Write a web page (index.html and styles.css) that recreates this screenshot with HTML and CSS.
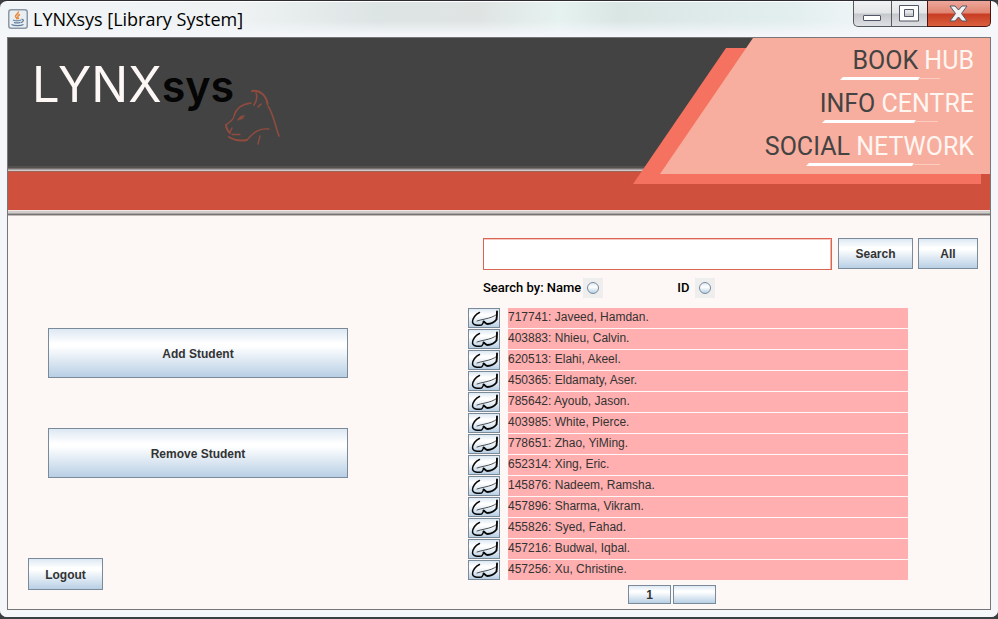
FILE: index.html
```html
<!DOCTYPE html>
<html lang="en">
<head>
<meta charset="utf-8">
<title>LYNXsys [Library System]</title>
<link rel="stylesheet" href="styles.css">
</head>
<body>
<div class="window">
  <header class="titlebar">
    <svg class="app-icon" viewBox="0 0 20 20" aria-hidden="true">
      <rect x="0.75" y="0.75" width="18.5" height="18.5" rx="2.5" fill="#e9eef2" stroke="#8d99a6" stroke-width="1.5"/>
      <path d="M10 2.500c1.500 2-3 3-2.500 5 .3 1 2 1.500 1.200 3M12 5.500c-2.500 1-3 2.500-1.200 4.500" fill="none" stroke="#e8883a" stroke-width="1.500"/>
      <path d="M5 11c2 1 6 1 8 0M13.500 10.500c3-.5 2 2.500-.5 3M6 13.300c2 .8 4.500.8 6.500 0M3.500 15.500c3 1.500 9 1.500 12 0" fill="none" stroke="#5d7f9f" stroke-width="1.300"/>
    </svg>
    <h1 class="title">LYNXsys [Library System]</h1>
    <div class="controls">
      <button class="control control-min" type="button" aria-label="Minimize">
        <svg width="18" height="6" viewBox="0 0 18 6"><rect x="0.5" y="0.500" width="17" height="5" rx="0.500" fill="#fff" stroke="#535666"/></svg>
      </button>
      <button class="control control-max" type="button" aria-label="Maximize">
        <svg width="20" height="17" viewBox="0 0 20 17"><path d="M.5.5h19v15.500H.5zM5.500 4.500v7h9v-7z" fill="#fff" fill-rule="evenodd" stroke="#535666"/></svg>
      </button>
      <button class="control control-close" type="button" aria-label="Close">
        <svg width="19" height="17" viewBox="0 0 19 17"><path d="M1 1h5l3.500 4L13 1h5l-5.500 7.500L18 16h-5l-3.500-4L6 16H1l5.500-7.500z" fill="#f2f2f2" stroke="#535666" stroke-linejoin="round"/></svg>
      </button>
    </div>
  </header>

  <div class="client">
    <div class="banner">
      <div class="masthead">
        <div class="logo"><span class="logo-lynx">LYNX</span><span class="logo-sys">sys</span></div>
        <svg class="lynx" viewBox="0 0 64 64" aria-hidden="true">
          <g fill="none" stroke="#8f4c3e" stroke-linecap="round" stroke-linejoin="round">
            <path stroke-width="2" d="M32 5c8-1 14 4 15.500 13M9 51c6 4 12 4 18 3M6 39c0 4 2 6 4 8"/>
            <path stroke-width="1.600" d="M36 7c2 4 1 7-2 12M41 18l-3 3M48 20c5 7 7 19 11 30"/>
            <path stroke-width="1.400" d="M31 17c-8 1-15 5-17 13 0 4-5 6-8 9M10 46l2-4"/>
            <path stroke-width="1.400" d="M18 34c2-3 4-4 6-4M20 33l3-1M12 48.500h8M27 54c7-8 12-12 22-11M40 50l-2 8"/>
          </g>
        </svg>
      </div>
      <div class="rule rule-top"></div>
      <div class="stripe"></div>
      <div class="rule rule-bottom"></div>
      <nav class="ribbon" aria-label="Main">
        <a class="nav-link" href="#books"><span class="strong">BOOK</span> HUB<span class="underline underline-a"></span></a>
        <a class="nav-link" href="#info"><span class="strong">INFO</span> CENTRE<span class="underline underline-b"></span></a>
        <a class="nav-link" href="#social"><span class="strong">SOCIAL</span> NETWORK<span class="underline underline-c"></span></a>
      </nav>
    </div>

    <main class="main">
      <section class="actions">
        <button class="button button-large" type="button">Add Student</button>
        <button class="button button-large" type="button">Remove Student</button>
        <button class="button button-logout" type="button">Logout</button>
      </section>

      <section class="browser">
        <form class="search">
          <div class="search-row">
            <input class="search-input" type="text" aria-label="Search students">
            <button class="button button-search" type="button">Search</button>
            <button class="button button-all" type="button">All</button>
          </div>
          <div class="filters">
            <label class="filter" for="by-name">Search by: Name</label>
            <span class="radio-box"><input class="radio" type="radio" name="by" id="by-name"></span>
            <label class="filter filter-id" for="by-id">ID</label>
            <span class="radio-box"><input class="radio" type="radio" name="by" id="by-id"></span>
          </div>
        </form>
        <svg class="symbols" aria-hidden="true">
          <symbol id="glasses" viewBox="0 0 30 18">
            <g fill="none" stroke="#080808" stroke-linecap="round" stroke-linejoin="round">
              <path stroke-width="1.500" d="M10.500 3.500C6.500 5 3.500 9.500 3.500 13c.3 3.500 5.500 3.500 9 3 1.300-.5 1.200-2.800 2.700-3"/>
              <path stroke-width="1.900" d="M14.500 12.500c1.500.5 2 2.500 4 2.500 3.500-.2 7-2 9-4.500.5-2.500.5-5 .5-8"/>
              <path stroke-width="0.700" d="M8 12c2-.8 5-1.300 8-2 5-1 9-2.500 11.500-4.500"/>
            </g>
          </symbol>
        </svg>
        <ul class="students">
          <li class="student"><button class="button view" type="button" aria-label="View 717741"><svg class="view-icon"><use href="#glasses"/></svg></button><span class="name">717741: Javeed, Hamdan.</span></li>
          <li class="student"><button class="button view" type="button" aria-label="View 403883"><svg class="view-icon"><use href="#glasses"/></svg></button><span class="name">403883: Nhieu, Calvin.</span></li>
          <li class="student"><button class="button view" type="button" aria-label="View 620513"><svg class="view-icon"><use href="#glasses"/></svg></button><span class="name">620513: Elahi, Akeel.</span></li>
          <li class="student"><button class="button view" type="button" aria-label="View 450365"><svg class="view-icon"><use href="#glasses"/></svg></button><span class="name">450365: Eldamaty, Aser.</span></li>
          <li class="student"><button class="button view" type="button" aria-label="View 785642"><svg class="view-icon"><use href="#glasses"/></svg></button><span class="name">785642: Ayoub, Jason.</span></li>
          <li class="student"><button class="button view" type="button" aria-label="View 403985"><svg class="view-icon"><use href="#glasses"/></svg></button><span class="name">403985: White, Pierce.</span></li>
          <li class="student"><button class="button view" type="button" aria-label="View 778651"><svg class="view-icon"><use href="#glasses"/></svg></button><span class="name">778651: Zhao, YiMing.</span></li>
          <li class="student"><button class="button view" type="button" aria-label="View 652314"><svg class="view-icon"><use href="#glasses"/></svg></button><span class="name">652314: Xing, Eric.</span></li>
          <li class="student"><button class="button view" type="button" aria-label="View 145876"><svg class="view-icon"><use href="#glasses"/></svg></button><span class="name">145876: Nadeem, Ramsha.</span></li>
          <li class="student"><button class="button view" type="button" aria-label="View 457896"><svg class="view-icon"><use href="#glasses"/></svg></button><span class="name">457896: Sharma, Vikram.</span></li>
          <li class="student"><button class="button view" type="button" aria-label="View 455826"><svg class="view-icon"><use href="#glasses"/></svg></button><span class="name">455826: Syed, Fahad.</span></li>
          <li class="student"><button class="button view" type="button" aria-label="View 457216"><svg class="view-icon"><use href="#glasses"/></svg></button><span class="name">457216: Budwal, Iqbal.</span></li>
          <li class="student"><button class="button view" type="button" aria-label="View 457256"><svg class="view-icon"><use href="#glasses"/></svg></button><span class="name">457256: Xu, Christine.</span></li>
        </ul>
        <div class="pager">
          <button class="button page" type="button">1</button>
          <button class="button page" type="button" aria-label="Next page"></button>
        </div>
      </section>
    </main>
  </div>
</div>
</body>
</html>
```
FILE: styles.css
```css
* { box-sizing: border-box; }

body {
  margin: 0;
  min-height: 100vh;
  padding-bottom: 2px;
  display: flex;
  background: #3a3f44;
  font-family: "Liberation Sans", Arial, sans-serif;
}

.window {
  flex: 1;
  display: flex;
  flex-direction: column;
  padding: 0 7px 7px;
  border-top: 1px solid #2d2c33;
  border-radius: 7px;
  background:
    linear-gradient(#fff 1px, transparent 1px),
    linear-gradient(transparent 20px, #f4f6fa 34px),
    linear-gradient(90deg, #f2f5f7 0%, #eef2f3 24%, #dde4e4 38%, #dfe4e3 48%, #e6f2f0 56%, #dae6e4 62%, #e3efee 80%, #f6f8fa 90%);
}

.titlebar {
  display: flex;
  height: 36px;
}

.app-icon { width: 20px; height: 20px; margin: 8px 5px 0 1px; }

.title {
  flex: 1;
  margin: 0;
  font: 400 18px/36px "Open Sans", "Noto Sans", sans-serif;
  color: #000;
}

.controls { display: flex; height: 26px; }

.control {
  display: flex;
  align-items: center;
  justify-content: center;
  padding: 0;
  border: 1px solid #555a62;
  border-top: 0;
  background: linear-gradient(#f0f2f3, #e3e5e7 48%, #c5c8cb 52%, #dedfe2);
}

.control-min { width: 39px; padding: 8px 2px 0 0; border-radius: 0 0 0 5px; }
.control-max { width: 35px; padding-right: 2px; border-left: 0; border-right: 0; }
.control-close {
  width: 64px;
  padding-right: 2px;
  border-color: #4c1511;
  border-radius: 0 0 5px 0;
  background: linear-gradient(#eda79a, #e08572 48%, #c83c22 52%, #d9603f);
}

.client {
  flex: 1;
  display: flex;
  flex-direction: column;
  border: 1px solid #77777a;
  background: #fdf8f5;
}

.banner { position: relative; }

.masthead {
  display: flex;
  height: 128px;
  background: #434343;
}

.logo { padding: 15px 0 0 24px; font-family: Inter, sans-serif; line-height: 64px; }
.logo-lynx { font-size: 49px; font-weight: 400; color: #fdf8f5; }
.logo-sys { font-size: 43px; font-weight: 600; color: #050505; }

.lynx { width: 64px; height: 64px; margin: 48px 0 0 -14px; }

.rule { height: 6px; }
.rule-top { background: linear-gradient(#55514f 0 2px, #77706f 2px 3px, #a39f9f 3px 4px, #d0c9c8 4px 5px, #9b6258 5px); }
.rule-bottom { background: linear-gradient(#f3e5e2 0 1px, #d2cdca 1px 3px, #aaa6a5 3px 4px, #777172 4px 5px, #c0bab9 5px); }
.stripe { height: 38px; background: #cf503c; }

.ribbon {
  position: absolute;
  z-index: 0;
  top: 0;
  right: 0;
  width: 357px;
  height: 146px;
  padding: 7px 16px 0 0;
  display: flex;
  flex-direction: column;
  align-items: flex-end;
  gap: 11px;
}

.ribbon::before,
.ribbon::after {
  content: "";
  position: absolute;
  z-index: -1;
  clip-path: polygon(93px 0, 100% 0, 100% 100%, 0 100%);
}
.ribbon::before {
  inset: 10px 9px 0 0;
  background: #f4725f;
}
.ribbon::after {
  inset: 0 0 10px 27px;
  background: #f7ae9e;
}

.nav-link {
  position: relative;
  font: 400 25px/32px Roboto, sans-serif;
  color: #fff6f2;
  text-decoration: none;
}
.strong { color: #434343; }

.underline {
  position: absolute;
  top: 32px;
  right: 34px;
  height: 3px;
}
.underline::before,
.underline::after {
  content: "";
  position: absolute;
}
.underline::before {
  inset: 0 20px 0 0;
  background: #fff;
  clip-path: polygon(3px 0, 100% 0, calc(100% - 2px) 100%, 0 100%);
}
.underline::after {
  right: 0;
  bottom: 1px;
  width: 20px;
  height: 1px;
  background: #fbcdc2;
}
.underline-a { width: 100px; }
.underline-b { right: 36px; width: 116px; }
.underline-b::before { right: 22px; }
.underline-b::after { width: 22px; }
.underline-c { width: 134px; }
.underline-c::before { right: 26px; }
.underline-c::after { width: 26px; }

.main {
  flex: 1;
  display: grid;
  grid-template-columns: 460fr 522fr;
}

.actions {
  display: flex;
  flex-direction: column;
  align-items: flex-start;
  gap: 50px;
  padding: 112px 20px 19px;
}

.button {
  padding: 0;
  border: 1px solid #7a8a99;
  background: linear-gradient(#dde8f3, #fff 30%, #fff 36%, #b8cfe5);
  font: 700 12px/16px "Liberation Sans", Arial, sans-serif;
  color: #333;
}

.button-large,
.button-logout { padding-top: 2px; }
.button-large { width: 300px; height: 50px; margin-left: 20px; }
.button-logout { width: 75px; height: 32px; margin-top: auto; }

.browser { padding: 22px 12px 5px 0; }
.search { padding-left: 15px; }
.search-row { display: flex; gap: 5px; }

.search-input {
  flex: 1;
  min-width: 0;
  height: 32px;
  margin-right: 1px;
  padding: 0 6px;
  border: 1px solid #d96552;
  box-shadow: inset 0 1px #f5c9c1, inset -1px 0 #f0b3a8;
  background: #fff;
  font: 14px "Liberation Sans", Arial, sans-serif;
}
.button-search { width: 75px; height: 31px; }
.button-all { width: 60px; height: 31px; }

.filters { display: flex; align-items: center; height: 20px; margin: 8px 0 10px; }
.filter { font: 500 13px/20px Roboto, sans-serif; color: #000; margin-right: 2px; }
.filter-id { margin-left: 74px; margin-right: 5px; }

.radio-box { display: flex; padding: 4px; background: #eee; }
.radio {
  appearance: none;
  width: 12px;
  height: 12px;
  margin: 0;
  border: 1px solid #7a8a99;
  border-radius: 50%;
  background: linear-gradient(#dde8f3, #fff 40%, #b8cfe5);
}
.radio:checked { box-shadow: inset 0 0 0 2px #fff; background: #333; }

.symbols { display: none; }

.students {
  display: flex;
  flex-direction: column;
  gap: 1px;
  margin: 0 70px 0 0;
  padding: 0;
  list-style: none;
}
.student { display: flex; gap: 8px; height: 20px; }
.view { width: 32px; display: flex; }
.view-icon { width: 30px; height: 18px; }
.name { flex: 1; background: #ffafaf; font-size: 12px; line-height: 18px; color: #333; }

.pager { display: flex; gap: 2px; margin: 5px 0 0 160px; }
.page { width: 43px; height: 19px; }
```
